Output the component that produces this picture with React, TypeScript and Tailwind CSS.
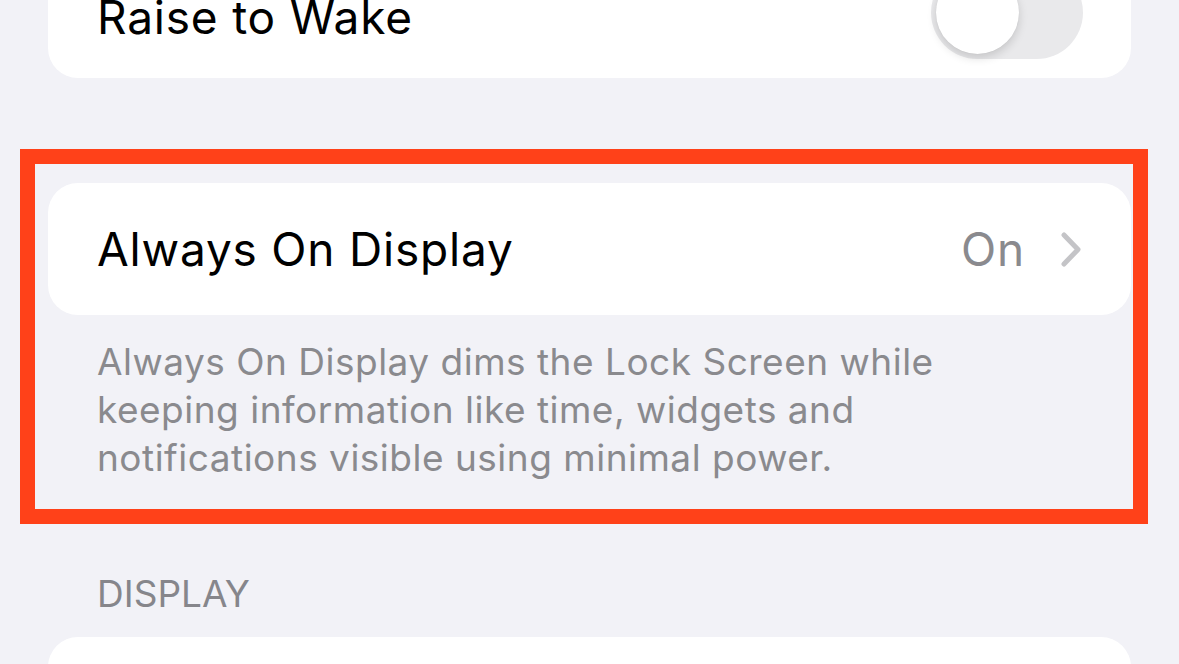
import React from "react";

export default function App() {
  return (
    <div
      className="w-[1179px] h-[664px] overflow-hidden bg-[#f2f2f7]"
      style={{ fontFamily: "Inter, 'Noto Sans', sans-serif" }}
    >
      <div className="flex flex-col px-[48px]">
        {/* Raise to Wake card */}
        <div className="-mt-[54px] h-[132px] rounded-[30px] bg-white flex items-center justify-between pl-[49px] pr-[48px]">
          <span className="mt-[10px] text-[46px] leading-none text-black tracking-[0.8px]">Raise to Wake</span>
          <div className="relative w-[152px] h-[93px] rounded-full bg-[#e9e9eb]">
            <div className="absolute left-[5px] top-[5px] w-[83px] h-[83px] rounded-full bg-white shadow-[0_4px_10px_rgba(0,0,0,0.15),0_0_1px_rgba(0,0,0,0.1)]" />
          </div>
        </div>

        {/* Always On Display section */}
        <div className="relative mt-[105px]">
          <div className="h-[132px] rounded-[30px] bg-white flex items-center justify-between pl-[49px] pr-[50px]">
            <span className="text-[46px] leading-none text-black tracking-[0.8px]">Always On Display</span>
            <div className="flex items-center gap-[36px]">
              <span className="text-[46px] leading-none text-[#8a8a8e] tracking-[0.8px]">On</span>
              <svg width="20" height="35" viewBox="0 0 20 35" fill="none">
                <path d="M3 3 L17 17.5 L3 32" stroke="#c4c4c7" strokeWidth="5" strokeLinecap="round" strokeLinejoin="round" />
              </svg>
            </div>
          </div>
          <p className="mt-[23px] pl-[49px] pr-[20px] text-[37px] leading-[48px] text-[#8a8a8e] tracking-[0.5px] whitespace-nowrap">
            Always On Display dims the Lock Screen while
            <br />
            keeping information like time, widgets and
            <br />
            notifications visible using minimal power.
          </p>
          <div className="absolute -left-[28px] -top-[34px] w-[1128px] h-[375px] border-[15px] border-[#ff4119] pointer-events-none" />
        </div>

        {/* DISPLAY header */}
        <div className="mt-[88px] pl-[49px] text-[37px] leading-[48px] text-[#86868b]">DISPLAY</div>
        <div className="mt-[19px] h-[200px] rounded-[30px] bg-white" />
      </div>
    </div>
  );
}
